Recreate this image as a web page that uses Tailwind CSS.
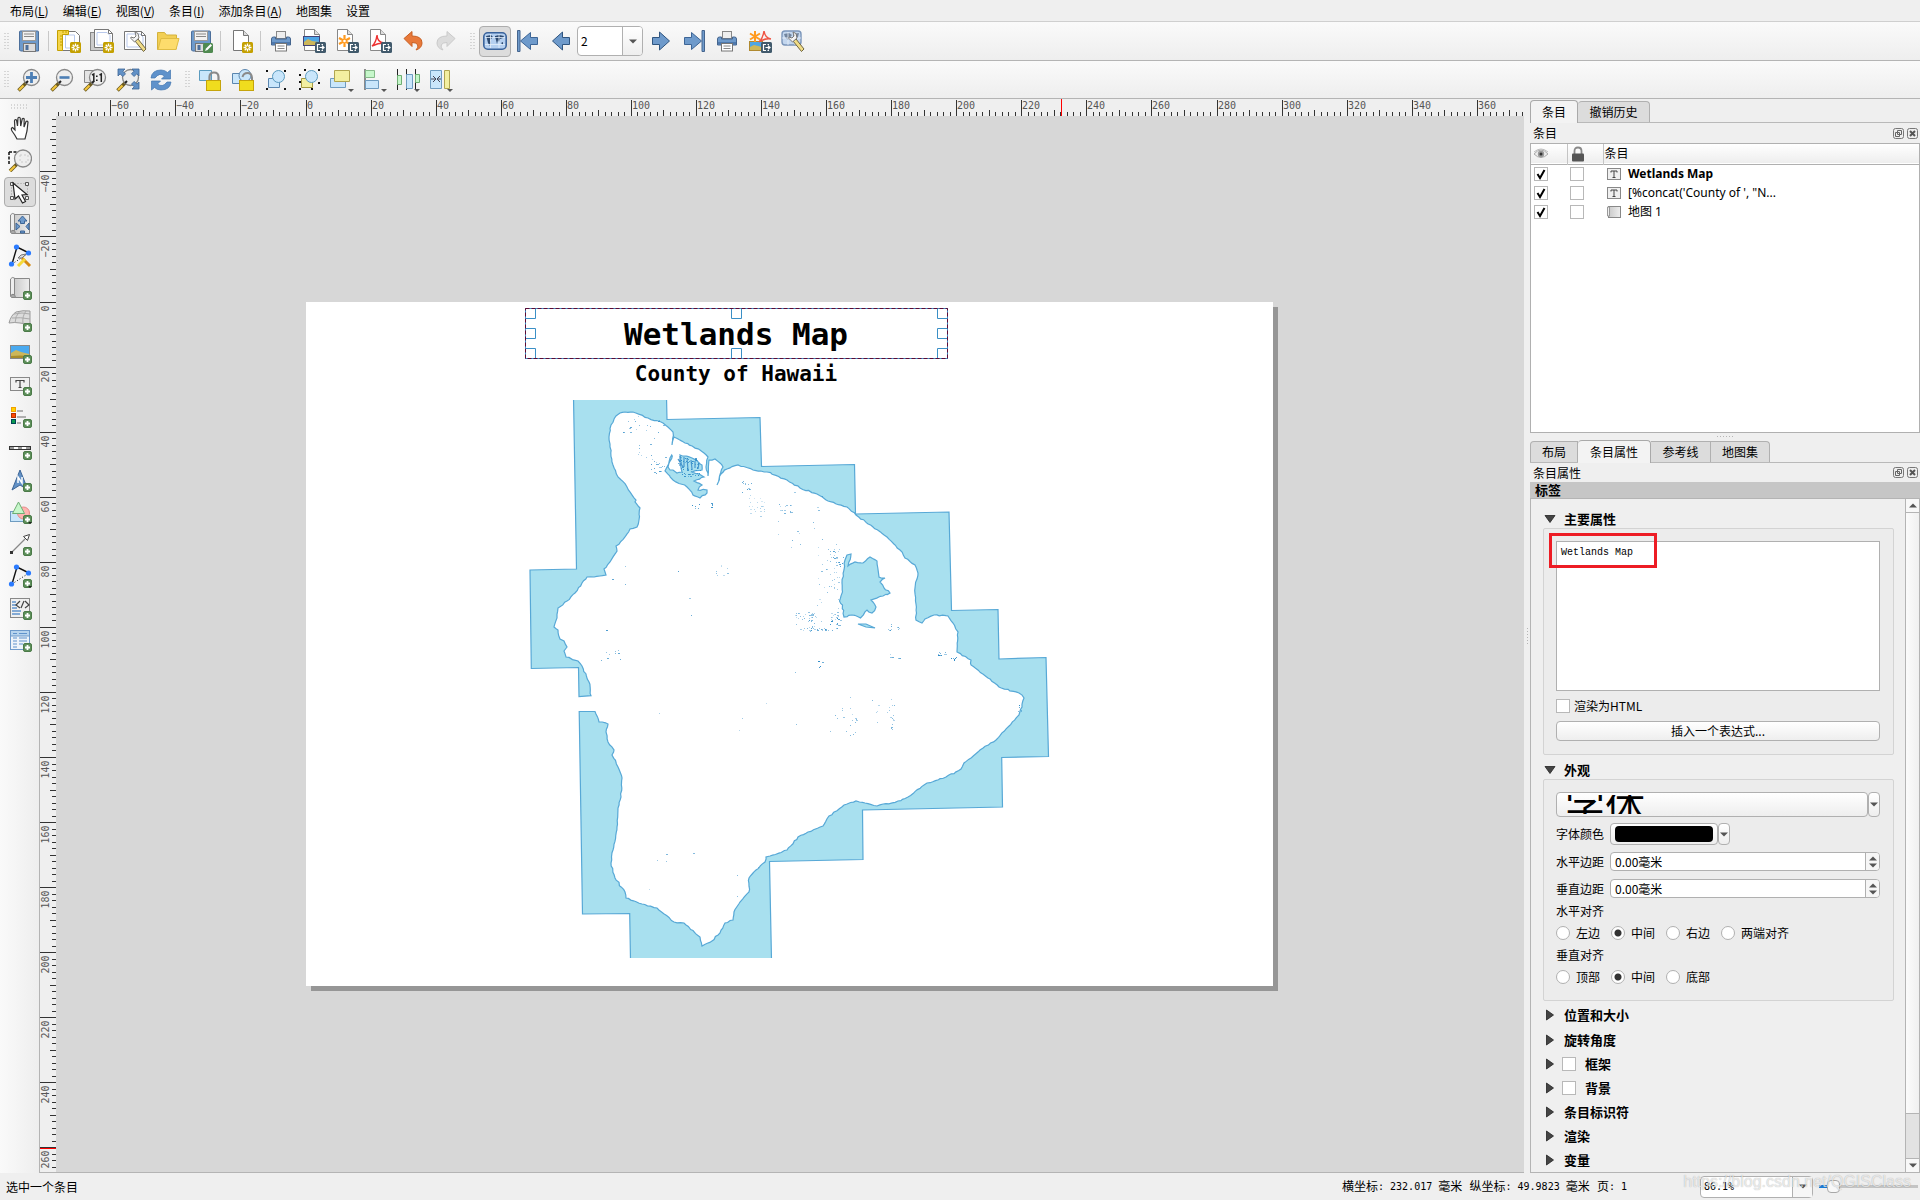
<!DOCTYPE html>
<html lang="zh-CN">
<head>
<meta charset="utf-8">
<title>布局</title>
<script src="https://cdn.jsdelivr.net/npm/@tailwindcss/browser@4"></script>
</head>
<body class="h-screen overflow-hidden bg-[#efefef] text-black text-xs leading-4 font-['Noto_Sans_CJK_SC',sans-serif]">

<svg class="absolute size-0" aria-hidden="true">
  <defs>
    <linearGradient id="gGray" x1="0" x2="1"><stop offset="0" stop-color="#c9c9c9"/><stop offset="1" stop-color="#eeeeee"/></linearGradient>
  </defs>
  <symbol id="star" viewBox="0 0 11 11"><rect width="11" height="11" rx="1.5" fill="#c4a000"/><path d="M5.500 1.500v8M1.500 5.500h8M2.700 2.700l5.600 5.600M8.300 2.700l-5.600 5.600" stroke="#fff" stroke-width="1.300"/><circle cx="5.500" cy="5.500" r="1.200" fill="#c4a000"/></symbol>
  <symbol id="plus" viewBox="0 0 9 9"><rect x=".5" y=".5" width="8" height="8" rx="1.500" fill="#5d8f5a" stroke="#4b7a48"/><path d="M4.500 2v5M2 4.500h5" stroke="#fff" stroke-width="1.800"/></symbol>
  <symbol id="export" viewBox="0 0 11 11"><rect width="11" height="11" rx="1.500" fill="#415a6c"/><path d="M5 2.500H2.500v6H5M6.500 2.500H8M6.500 8.500H8M4.500 5.500h4M7 3.800l2 1.700-2 1.700" fill="none" stroke="#fff" stroke-width="1.200"/></symbol>
  <symbol id="page" viewBox="0 0 24 24"><path d="M4.500 1.500h10l5 5v15h-15z" fill="#fff" stroke="#777"/><path d="M14.500 1.500v5h5" fill="#ddd" stroke="#777"/></symbol>
  <symbol id="save" viewBox="0 0 24 24"><path d="M2.500 3q0-1 1-1h17q1 0 1 1v19h-18l-1-1z" fill="#6e9acb" stroke="#4c6f9b"/><rect x="5.500" y="2.500" width="13" height="9" fill="#f2f2f2" stroke="#999"/><path d="M7 5h10M7 7.500h10" stroke="#888"/><rect x="6.500" y="14.500" width="12" height="8" fill="#ddd" stroke="#777"/><rect x="8.500" y="16" width="3" height="5" fill="#4c6f9b"/></symbol>
  <symbol id="saveas" viewBox="0 0 24 24"><use href="#save"/><rect x="14" y="14" width="10" height="10" rx="1.500" fill="#4f8a50"/><path d="M16 22l1-2.500 4.500-4.500 1.500 1.500-4.500 4.500z" fill="#fff"/></symbol>
  <symbol id="newlayout" viewBox="0 0 24 24"><path d="M5.500 2.500h13l4 4v15h-17z" fill="#fff" stroke="#777"/><path d="M8.500 6h9v13h-9z" fill="none" stroke="#b9c9ec"/><path d="M.5 1.500h11v4h-6v16h-5z" fill="#f5d54a" stroke="#c4a000"/><path d="M3 7h3M3 10h3M3 13h3M3 16h3M6 2v2M9 2v2" stroke="#c4a000"/><use href="#star" x="13" y="13" width="11" height="11"/></symbol>
  <symbol id="duplayout" viewBox="0 0 24 24"><rect x=".5" y="3.500" width="17" height="18" fill="#ccc" stroke="#888"/><path d="M4.500 .500h14l4 4v14h-18z" fill="#fff" stroke="#777"/><path d="M7 3.500h10l3 3v9.500h-13z" fill="none" stroke="#b9c9ec"/><path d="M18.500 .500v4h4" fill="none" stroke="#777"/><use href="#star" x="13" y="13" width="11" height="11"/></symbol>
  <symbol id="wrench" viewBox="0 0 24 24"><path d="M12 12l3-2 8 10-2.500 2.500z" fill="#f0dc86" stroke="#6f6440"/><path d="M8 9.500l3.500 3.500 4.500-4-1-4.500-3-1.500 1 4-2 2-3-1q-.5 1 0 1.500z" fill="#f4f4f4" stroke="#777"/></symbol>
  <symbol id="manager" viewBox="0 0 24 24"><path d="M1.500 2.500h17l4 4v14h-21z" fill="#fff" stroke="#777"/><path d="M4 5h13l3 3v10h-16z" fill="none" stroke="#b9c9ec"/><path d="M18.500 2.500v4h4" fill="none" stroke="#777"/><use href="#wrench"/></symbol>
  <symbol id="folder" viewBox="0 0 24 24"><path d="M1.500 20.500v-17h7l2 2.500h10v14z" fill="#f2cf55" stroke="#d4b23c"/><path d="M2 20.500l3-11h18l-3 11z" fill="#fddc6c" stroke="#e0bd45"/></symbol>
  <symbol id="newpage" viewBox="0 0 24 24"><use href="#page"/><use href="#star" x="13" y="13" width="11" height="11"/></symbol>
  <symbol id="print" viewBox="0 0 24 24"><rect x="7.500" y="2.500" width="9" height="7" fill="#eee" stroke="#888"/><path d="M2.500 10q0-2 2-2h2v2h11v-2h2q2 0 2 2v6h-19z" fill="#6e9acb" stroke="#45658e"/><path d="M3 13h18v2.500h-18z" fill="#4f79ac"/><rect x="6.500" y="14.500" width="11" height="7.500" fill="#fff" stroke="#777"/><path d="M8.500 17h7M8.500 19.500h7" stroke="#888"/></symbol>
  <symbol id="exportimg" viewBox="0 0 24 24"><path d="M2.500 .500h10l5 5v16h-15z" fill="#fff" stroke="#888"/><path d="M12.500 .500v5h5" fill="#ddd" stroke="#888"/><rect x="1.500" y="7.500" width="16" height="9" fill="#4ea6e6" stroke="#447"/><path d="M2 16v-3l4-3 4 2 7 1v3z" fill="#cdb75a"/><use href="#export" x="13" y="13" width="11" height="11"/></symbol>
  <symbol id="exportsvg" viewBox="0 0 24 24"><path d="M2.500 .500h10l5 5v16h-15z" fill="#fff" stroke="#888"/><path d="M12.500 .500v5h5" fill="#ddd" stroke="#888"/><path d="M9.500 6v12M4 9l11 6M15 9l-11 6" stroke="#ff9a1f" stroke-width="2.200"/><circle cx="9.500" cy="12" r="1.300" fill="#fff"/><use href="#export" x="13" y="13" width="11" height="11"/></symbol>
  <symbol id="exportpdf" viewBox="0 0 24 24"><path d="M2.500 .500h10l5 5v16h-15z" fill="#fff" stroke="#888"/><path d="M12.500 .500v5h5" fill="#ddd" stroke="#888"/><path d="M4 17q4-3 5-11q0 7 7 8q-6 0-12 3z" fill="none" stroke="#e33" stroke-width="1.500"/><use href="#export" x="13" y="13" width="11" height="11"/></symbol>
  <symbol id="undo" viewBox="0 0 24 24"><path d="M3 9.500l8-7v4.500q10 0 10 7 0 5-6 7 3-3 1.500-5.500-1.500-2-5.500-2v4z" fill="#e8793a" stroke="#c85f22"/></symbol>
  <symbol id="redo" viewBox="0 0 24 24"><path d="M21 9.500l-8-7v4.500q-10 0-10 7 0 5 6 7-3-3-1.500-5.500 1.500-2 5.500-2v4z" fill="#dcdcdc" stroke="#cacaca"/></symbol>
  <symbol id="atlas" viewBox="0 0 24 24"><rect x=".8" y="3.800" width="22.400" height="16.400" rx="4" fill="#b5d0f0" stroke="#3a639b" stroke-width="1.600"/><path d="M3 7l5-1 2 2-3 3 1 3-1 3-2-3-1-4zM12 7l4-1 5 1-1 2-3 1-1 3-1-2-1 4-1-4-1-3zM18 14l2-1v3z" fill="#2d4a70"/><path d="M7.500 5v14M16 5v14M2 8.500h20M2 15.500h20" stroke="#e6f0fb" stroke-width=".8"/></symbol>
  <symbol id="first" viewBox="0 0 24 24"><path d="M21.500 8.500h-7v-5l-10 8.500 10 8.500v-5h7z" fill="#6e9acb" stroke="#3d6596"/><path d="M1.500 1.500h2.500v21h-2.500z" fill="#6e9acb" stroke="#45658e"/></symbol>
  <symbol id="prev" viewBox="0 0 24 24"><path d="M20.500 8.500h-7v-5.500l-10 9 10 9v-5.500h7z" fill="#6e9acb" stroke="#2f5580"/></symbol>
  <symbol id="next" viewBox="0 0 24 24"><path d="M3.500 8.500h7v-5.500l10 9-10 9v-5.500h-7z" fill="#6e9acb" stroke="#2f5580"/></symbol>
  <symbol id="last" viewBox="0 0 24 24"><path d="M2.500 8.500h7v-5l10 8.500-10 8.500v-5h-7z" fill="#6e9acb" stroke="#3d6596"/><path d="M20 1.500h2.500v21h-2.500z" fill="#6e9acb" stroke="#45658e"/></symbol>
  <symbol id="atlasexport" viewBox="0 0 24 24"><rect x="1.500" y="12.500" width="13" height="9" fill="#4ea6e6" stroke="#b08a30"/><path d="M2 21v-3l4-2 8 2v3z" fill="#cdb75a"/><path d="M7 2v11M2 4.500l10 6M12 4.500l-10 6" stroke="#ff9a1f" stroke-width="2"/><path d="M11 13q4-4 5-11q1 7 7 8q-6-1-12 3z" fill="none" stroke="#e54" stroke-width="1.500"/><use href="#export" x="13" y="13" width="11" height="11"/></symbol>
  <symbol id="atlasset" viewBox="0 0 24 24"><g opacity=".65"><rect x="1" y="2" width="19" height="14" rx="3" fill="#a9c7ec" stroke="#3a639b" stroke-width="1.400"/><path d="M3 5l5-1 3 2-4 5-3-3zM12 5l6-1-1 4-3 4-2-4z" fill="#2d4a70"/><path d="M7 3v13M14 3v13M1 9h19" stroke="#e6f0fb" stroke-width=".8"/></g><use href="#wrench"/></symbol>
  <symbol id="lens" viewBox="0 0 24 24"><path d="M9 15l-7.500 7.500" stroke="#6b5a20" stroke-width="3.500"/><path d="M6.500 17.500l-4.500 4.500" stroke="#f3c53b" stroke-width="2.200"/><circle cx="14.500" cy="9.500" r="8" fill="#eee" stroke="#888" stroke-width="1.300"/><path d="M9 15l2-2" stroke="#222" stroke-width="2"/></symbol>
  <symbol id="zoomin" viewBox="0 0 24 24"><use href="#lens"/><path d="M14.500 4v11M9 9.500h11" stroke="#4d7fb5" stroke-width="2.800"/></symbol>
  <symbol id="zoomout" viewBox="0 0 24 24"><use href="#lens"/><path d="M9.500 9.500h10" stroke="#4d7fb5" stroke-width="2.600"/></symbol>
  <symbol id="zoom11" viewBox="0 0 24 24"><path d="M1.500 2.500h12v12h-12z" fill="#e4e4e4" stroke="#888"/><use href="#lens"/><path d="M9 7l1.800-1v8M16.500 7l1.800-1v8" fill="none" stroke="#222" stroke-width="1.500"/><path d="M13 7.500h1.600v1.600h-1.600zM13 11.500h1.600v1.600h-1.600z" fill="#222"/></symbol>
  <symbol id="zoomfull" viewBox="0 0 24 24"><use href="#lens"/><path d="M2 1h7l-2.200 2.200 2.700 2.700-2.700 2.700-2.700-2.700-2.100 2.100zM23 1v7l-2.200-2.200-2.700 2.700-2.700-2.700 2.700-2.700-2.100-2.100zM23 21h-7l2.200-2.200-2.700-2.700 2.700-2.700 2.700 2.700 2.100-2.100z" fill="#6291c6" stroke="#3d6596" stroke-width=".8"/></symbol>
  <symbol id="refresh" viewBox="0 0 24 24"><path d="M2 10q1-8 10-8 4 0 6.500 2.500l3-2.500v9h-9l3-3q-5-4-9.500 2z" fill="#5f92cb" stroke="#4477b0" stroke-width=".7"/><path d="M22 14q-1 8-10 8-4 0-6.500-2.500l-3 2.500v-9h9l-3 3q5 4 9.500-2z" fill="#5f92cb" stroke="#4477b0" stroke-width=".7"/></symbol>
  <symbol id="lockb" viewBox="0 0 24 24"><rect x="8.500" y="12.500" width="14" height="10" fill="#f0dc1e" stroke="#c5a40b"/></symbol>
  <symbol id="lockall" viewBox="0 0 24 24"><path d="M1.500 2.500h12v10h-12z" fill="#c9e6fb" stroke="#5b9bbf"/><path d="M11.500 12v-3q0-4.500 4.500-4.500t4.500 4.500v3" fill="none" stroke="#8a8a8a" stroke-width="2.200"/><use href="#lockb"/></symbol>
  <symbol id="unlock" viewBox="0 0 24 24"><path d="M1.500 5.500h10v10h-10z" fill="#c9e6fb" stroke="#5b86af"/><circle cx="14" cy="7.500" r="6" fill="#c9e6fb" stroke="#5b86af"/><path d="M11.500 9q1-4 5-4t4.500 4.500v3" fill="none" stroke="#8a8a8a" stroke-width="2"/><use href="#lockb"/></symbol>
  <symbol id="group" viewBox="0 0 24 24"><path d="M4.500 10.500h11v9h-11z" fill="#c9e6fb" stroke="#5b86af"/><circle cx="14.500" cy="8.500" r="6" fill="#c9e6fb" stroke="#5b9bbf"/><path d="M2 2h2v2h-2zM20 2h2v2h-2zM2 20h2v2h-2zM20 20h2v2h-2z" fill="#111"/></symbol>
  <symbol id="ungroup" viewBox="0 0 24 24"><path d="M4.500 10.500h11v9h-11z" fill="#f3efa0" stroke="#a59a40"/><circle cx="14.500" cy="8.500" r="6" fill="#c9e6fb" stroke="#5b9bbf"/><path d="M2 6h2v2h-2zM2 20h2v2h-2zM14 20h2v2h-2zM7 1h2v2h-2zM21 1h2v2h-2zM21 14h2v2h-2zM2 13h2v2h-2z" fill="#111"/></symbol>
  <symbol id="raise" viewBox="0 0 24 24"><path d="M.5 10.500h15v9h-15z" fill="#c9e6fb" stroke="#6f9cc0"/><path d="M4.500 2.500h15v11h-15z" fill="#f3efa0" stroke="#b0a550"/><path d="M18 21h6l-3 3z" fill="#555"/></symbol>
  <symbol id="align" viewBox="0 0 24 24"><path d="M2 1v21" stroke="#222"/><path d="M2.500 2.500h9v7h-9z" fill="#c6f7ca" stroke="#86bb8a"/><path d="M2.500 12.500h13v8h-13z" fill="#c9e6fb" stroke="#6f9cc0"/><path d="M18 21h6l-3 3z" fill="#555"/></symbol>
  <symbol id="distribute" viewBox="0 0 24 24"><path d="M1.500 1v21M10.500 1v21M19.500 1v21" stroke="#222"/><path d="M1.500 7.500h4v9h-4zM19.500 6.500h4v8h-4z" fill="#c6f7ca" stroke="#6fae74"/><path d="M10.500 6.500h6v14h-6z" fill="#c9e6fb" stroke="#6f9cc0"/><path d="M18 21h6l-3 3z" fill="#555"/></symbol>
  <symbol id="resize" viewBox="0 0 24 24"><path d="M1.500 2.500h11v18h-11z" fill="#c9e6fb" stroke="#6f9cc0"/><path d="M15.500 2.500h5v18h-5z" fill="#f3efa0" stroke="#b0a550"/><path d="M2 11h4M4 8l3 3-3 3M12 11h-3M11 8l-3 3 3 3" fill="none" stroke="#445"/><path d="M18 21h6l-3 3z" fill="#555"/></symbol>
  <symbol id="hand" viewBox="0 0 24 24"><path d="M9 23q-2-4-5-8-1.500-3 .5-3.500l2.500 2.500-.5-9q.3-2 2-1l1 6 .5-8q1-1.500 2.200 0l.5 8 1.500-7q1-1.200 2 0l-.2 8 2-5.500q1.300-1 2 .5l-1 9-2 8z" fill="#fff" stroke="#333" stroke-width="1.200"/></symbol>
  <symbol id="zoomtool" viewBox="0 0 24 24"><path d="M1 4h12M1 4v12" stroke="#111" stroke-width="1.500" stroke-dasharray="3 1.500"/><path d="M9 16l-7 7" stroke="#6b5a20" stroke-width="3.500"/><path d="M7 18l-5 5" stroke="#f3c53b" stroke-width="2"/><circle cx="15" cy="10.500" r="8.500" fill="#eee" stroke="#888" stroke-width="1.300"/><path d="M12 7h8v7h-8z" fill="none" stroke="#ccc" stroke-dasharray="2 2"/></symbol>
  <symbol id="select" viewBox="0 0 24 24"><path d="M3.500 3.500h16v15h-16z" fill="none" stroke="#999" stroke-dasharray="1 2"/><path d="M2.500 2.500h3v3h-3zM17.500 2.500h3v3h-3zM2.500 16.500h3v3h-3zM17.500 16.500h3v3h-3z" fill="#eee" stroke="#555"/><path d="M5 3l2 16 3.500-3 4 7 3-1.500-3.500-6.500 5-.5z" fill="#fff" stroke="#222" stroke-width="1.200"/></symbol>
  <symbol id="scroll" viewBox="0 0 24 24"><path d="M5.500 2.500h16v19h-16z" fill="url(#gGray)" stroke="#888"/><path d="M2.500 3q1.500-2.500 4-1v16.500q-3-1-4 1.500z" fill="#eee" stroke="#888"/><path d="M2.500 20q1-2 4-1.500l1 3h-4z" fill="#aaa" stroke="#888"/></symbol>
  <symbol id="movecontent" viewBox="0 0 24 24"><use href="#scroll"/><path d="M14.500 4l4.500 5h-2.500v2.500h-4v-2.500h-2.500zM8 11l4 3.500-4 3.500zM21 11v7l-3-3.500zM12.500 21v-2h4v2z" fill="#6e9acb" stroke="#3d6596"/></symbol>
  <symbol id="tri" viewBox="0 0 24 24"><path d="M4 20L9 3l12 6" fill="none" stroke="#111" stroke-width="1.400"/><path d="M4 20L21 9" stroke="#111" stroke-dasharray="1 2"/><circle cx="8.500" cy="3" r="2.600" fill="#2b7bff"/><circle cx="20.500" cy="9" r="2.600" fill="#2b7bff"/><circle cx="3.500" cy="20" r="2.600" fill="#2b7bff"/></symbol>
  <symbol id="editnodes" viewBox="0 0 24 24"><use href="#tri"/><path d="M14 14l8 8" stroke="#d58a12" stroke-width="3"/><path d="M17 15l-7 7" stroke="#f6da3a" stroke-width="3"/><path d="M10 14q2-4 8-4l-4 4z" fill="#ddd" stroke="#777"/></symbol>
  <symbol id="p" viewBox="0 0 24 24"><use href="#plus" x="15" y="15" width="9" height="9"/></symbol>
  <symbol id="addmap" viewBox="0 0 24 24"><use href="#scroll"/><use href="#p"/></symbol>
  <symbol id="add3d" viewBox="0 0 24 24"><path d="M1 15q2-8 7-11 7-2 14-1v15q-6-3-10-3-5-1-11 0z" fill="#dcdcdc" stroke="#999"/><path d="M4 10q8-1 18 1M6 6q8-2 16 0M12 3q-5 5-5 12M18 3q-4 5-3 13" fill="none" stroke="#aaa"/><use href="#p"/></symbol>
  <symbol id="addpic" viewBox="0 0 24 24"><rect x="2.500" y="5.500" width="19" height="13" fill="#4aaaf0" stroke="#888"/><path d="M3 18v-5l5-3 5 2 8 2v4z" fill="#cdb75a"/><path d="M3 18v-2q9-1 18 0v2z" fill="#a88d2c"/><use href="#p"/></symbol>
  <symbol id="addlabel" viewBox="0 0 24 24"><rect x="2.500" y="5.500" width="19" height="13" fill="#f0f0f0" stroke="#888"/><path d="M8 10.500v-2h8v2M12 8.500v7M10.500 15.500h3" fill="none" stroke="#444" stroke-width="1.200"/><use href="#p"/></symbol>
  <symbol id="addlegend" viewBox="0 0 24 24"><rect x="3.500" y="3.500" width="4" height="4" fill="#ffd200" stroke="#f0a000"/><rect x="3.500" y="9.500" width="4" height="4" fill="#ff4a00" stroke="#b33000"/><rect x="3.500" y="15.500" width="4" height="4" fill="#0a9a50" stroke="#045"/><path d="M9 7h6M9 13h9M9 19h4" stroke="#999" stroke-width="1.600"/><use href="#p"/></symbol>
  <symbol id="addscale" viewBox="0 0 24 24"><rect x="1.500" y="10.500" width="21" height="3" fill="#999" stroke="#333"/><path d="M6 12h4M14 12h4" stroke="#fff" stroke-width="2"/><use href="#p"/></symbol>
  <symbol id="addnorth" viewBox="0 0 24 24"><path d="M12 2l8 20-8-5-8 5z" fill="#6291c6" stroke="#3d6596"/><path d="M10 15v-6l4 6v-6" fill="none" stroke="#fff" stroke-width="1.500"/><use href="#p"/></symbol>
  <symbol id="addshape" viewBox="0 0 24 24"><rect x="2.500" y="11.500" width="13" height="10" fill="#c9e6fb" stroke="#6f9cc0"/><circle cx="15.500" cy="13" r="6" fill="#ffb3b0" stroke="#e58a88"/><path d="M10.500 2l6 11.500h-12z" fill="#c6f7ca" stroke="#6fae74"/><use href="#p"/><path d="M20 22h4l-2 2z" fill="#222"/></symbol>
  <symbol id="addarrow" viewBox="0 0 24 24"><path d="M4 20L17 7" stroke="#888" stroke-width="1.300"/><path d="M21.500 2.500l-6 2 4 4z" fill="#fff" stroke="#444"/><rect x="2" y="19" width="3" height="3" fill="#333"/><use href="#p"/></symbol>
  <symbol id="addnode" viewBox="0 0 24 24"><use href="#tri"/><use href="#p"/><path d="M20 22h4l-2 2z" fill="#222"/></symbol>
  <symbol id="addhtml" viewBox="0 0 24 24"><rect x="2.500" y="2.500" width="19" height="19" fill="#f0f0f0" stroke="#888"/><path d="M4 6h4M4 9h5M4 12h5M4 15h9M4 18h8" stroke="#5f92cb" stroke-width="1.700"/><path d="M12 5l-4 4 4 3M13 12l3-7M17 5l4 4-4 3" fill="none" stroke="#444" stroke-width="1.200"/><use href="#p"/></symbol>
  <symbol id="addtable" viewBox="0 0 24 24"><rect x="2.500" y="2.500" width="19" height="19" fill="#eef4fa" stroke="#6e9acb"/><path d="M3 3h18v5h-18z" fill="#b7d4ee"/><path d="M5 5.500h4M11 5.500h8M5 10h4M11 10h8M5 13h4M11 13h8M5 16h4M11 16h4M5 19h4" stroke="#5f92cb" stroke-width="1.200"/><path d="M3 8h18" stroke="#6e9acb"/><use href="#p"/></symbol>
  <symbol id="down" viewBox="0 0 8 5"><path d="M0 .5h8L4 4.500z" fill="#555"/></symbol>
  <symbol id="up" viewBox="0 0 8 5"><path d="M0 4.500h8L4 .5z" fill="#555"/></symbol>
  <symbol id="open" viewBox="0 0 12 12"><path d="M1 2.500h10L6 9.500z" fill="#444" stroke="#222" stroke-width=".8"/></symbol>
  <symbol id="shut" viewBox="0 0 12 12"><path d="M2.500 1v10L9.500 6z" fill="#444" stroke="#222" stroke-width=".8"/></symbol>
  <symbol id="check" viewBox="0 0 14 14"><path d="M3.500 7l2.500 4 4.500-8" fill="none" stroke="#000" stroke-width="2"/></symbol>
  <symbol id="float" viewBox="0 0 11 11"><rect x=".5" y=".5" width="10" height="10" rx="2" fill="#eee" stroke="#777"/><path d="M4.500 2.500h4v4h-4zM2.500 4.500h4v4h-4z" fill="#eee" stroke="#666"/></symbol>
  <symbol id="close" viewBox="0 0 11 11"><rect x=".5" y=".5" width="10" height="10" rx="2" fill="#eee" stroke="#777"/><path d="M3 3l5 5M8 3l-5 5" stroke="#555" stroke-width="2"/></symbol>
  <symbol id="label" viewBox="0 0 14 12"><rect x=".5" y=".5" width="13" height="11" fill="#f0f0f0" stroke="#888"/><path d="M4 4.500v-1.500h6v1.500M7 3v6.500M5.500 9.500h3" fill="none" stroke="#444"/></symbol>
  <symbol id="mapitem" viewBox="0 0 14 12"><rect x="1.500" y=".5" width="12" height="11" fill="url(#gGray)" stroke="#888"/><path d="M.5 1h2v9h-2z" fill="#eee" stroke="#999"/></symbol>
  <symbol id="eye" viewBox="0 0 16 12"><path d="M1 6q7-8 14 0-7 7-14 0z" fill="#eee" stroke="#aaa"/><circle cx="8" cy="6" r="3.200" fill="#999"/><circle cx="8" cy="6" r="1.500" fill="#333"/><path d="M1 4q7-6 14 0" fill="none" stroke="#bbb"/></symbol>
  <symbol id="lock" viewBox="0 0 14 16"><path d="M3.500 9v-4q0-3.500 3.500-3.500t3.500 3.500v4" fill="none" stroke="#888" stroke-width="1.800"/><rect x="1" y="7.500" width="12" height="8" rx="1" fill="#555"/></symbol>
  <symbol id="grip" viewBox="0 0 5 17"><path d="M1 0v17M4 0v17" stroke="#b5b5b5" stroke-dasharray="1 2"/></symbol>
</svg>

<div class="flex h-full flex-col">
  <nav class="flex h-[22px] shrink-0 items-center gap-[14px] border-b border-[#cfcfcf] px-[10px]" aria-label="菜单">
    <button class="whitespace-nowrap">布局(<u>L</u>)</button>
    <button class="whitespace-nowrap">编辑(<u>E</u>)</button>
    <button class="whitespace-nowrap">视图(<u>V</u>)</button>
    <button class="whitespace-nowrap">条目(<u>I</u>)</button>
    <button class="whitespace-nowrap">添加条目(<u>A</u>)</button>
    <button class="whitespace-nowrap">地图集</button>
    <button class="whitespace-nowrap">设置</button>
  </nav>

  <div role="toolbar" aria-label="布局工具" class="flex h-[39px] shrink-0 items-center border-b border-[#b4b4b4] bg-linear-to-b from-[#fafafa] to-[#eeeeee]">
    <svg class="ml-1 mr-[3px] h-[17px] w-[5px] shrink-0"><use href="#grip"/></svg>
    <span data-icons="save | newlayout duplayout manager folder saveas | newpage | print exportimg exportsvg exportpdf undo redo" class="flex items-center"></span>
    <svg class="ml-2 mr-1 h-[17px] w-[5px] shrink-0"><use href="#grip"/></svg>
    <button aria-label="预览地图集" aria-pressed="true" class="flex h-[31px] w-8 items-center justify-center rounded-sm border border-[#adadad] bg-[#dcdcdc]"><svg class="size-6"><use href="#atlas"/></svg></button>
    <span data-icons="first prev" class="flex items-center"></span>
    <span class="mr-px flex h-[30px] w-[66px] overflow-hidden rounded-sm border border-[#b0b0b0] bg-white">
      <input aria-label="地图集页" value="2" class="w-11 min-w-0 px-[3px] text-xs outline-none">
      <button aria-label="选择页" class="flex flex-1 items-center justify-center border-l border-[#b0b0b0] bg-linear-to-b from-white to-[#eeeeee]"><svg class="h-[5px] w-2"><use href="#down"/></svg></button>
    </span>
    <span data-icons="next last print atlasexport atlasset" class="flex items-center"></span>
  </div>

  <div role="toolbar" aria-label="动作" class="flex h-[38px] shrink-0 items-center border-b border-[#b4b4b4] bg-linear-to-b from-[#fafafa] to-[#eeeeee]">
    <svg class="ml-1 mr-[3px] h-[17px] w-[5px] shrink-0"><use href="#grip"/></svg>
    <span data-icons="zoomin zoomout zoom11 zoomfull refresh" class="flex items-center"></span>
    <svg class="ml-2 mr-[3px] h-[17px] w-[5px] shrink-0"><use href="#grip"/></svg>
    <span data-icons="lockall unlock group ungroup raise align distribute resize" class="flex items-center"></span>
  </div>

  <div class="flex min-h-0 flex-1">
    <div id="tools" role="toolbar" aria-label="工具箱" class="flex w-10 shrink-0 flex-col items-center border-r border-[#b4b4b4] bg-linear-to-r from-[#fafafa] to-[#eeeeee] pt-[5px]">
      <svg class="mb-[3px] h-[5px] w-[17px] shrink-0"><path d="M0 1h17M0 4h17" stroke="#b5b5b5" stroke-dasharray="1 2"/></svg>
    </div>

    <main class="flex min-w-0 flex-1 flex-col border-b border-[#b4b4b4]">
      <svg id="hruler" class="h-[17px] w-full shrink-0 bg-[#efefef] font-['DejaVu_Sans_Mono',monospace] text-[10px]"></svg>
      <div class="flex min-h-0 flex-1">
        <svg id="vruler" class="h-full w-4 shrink-0 bg-[#efefef] font-['DejaVu_Sans_Mono',monospace] text-[10px]"></svg>
        <div class="relative min-w-0 flex-1 overflow-hidden bg-[#d7d7d7]">
          <svg id="canvas" class="absolute inset-0 h-full w-full" aria-label="布局画布">
            <g transform="translate(-56 -116)">
              <rect x="311" y="307" width="967" height="684" fill="#969696"/>
              <rect x="306" y="302" width="967" height="684" fill="#fff"/>
              <g id="map"></g>
              <g text-anchor="middle" class="font-['DejaVu_Sans_Mono',monospace] font-bold">
                <text x="736" y="345" class="text-[31px]">Wetlands Map</text>
                <text x="736" y="381" class="text-[21px]">County of Hawaii</text>
              </g>
              <g fill="none" stroke="#3a8fc6">
                <rect x="525.500" y="308.500" width="422" height="50"/>
                <path d="M525.500 308.500h422v50h-422z" stroke="#5e0a35" stroke-dasharray="4 2"/>
                <path d="M535.500 309v9.500h-10M535.500 358v-9.500h-10M526 328.500h9.500v10h-9.500M937.500 309v9.500h10M937.500 358v-9.500h10M947 328.500h-9.500v10h9.500M731.500 309v9.500h10v-9.500M731.500 358v-9.500h10v9.500"/>
              </g>
            </g>
          </svg>
        </div>
      </div>
    </main>

    <div class="flex w-[6px] shrink-0 items-center justify-center"><svg class="h-[17px] w-[3px]"><path d="M1.500 0v17" stroke="#b5b5b5" stroke-dasharray="1 2"/></svg></div>

    <aside class="flex w-[390px] shrink-0 flex-col">
      <div role="tablist" class="flex h-6 shrink-0 items-end border-b border-[#b9b9b9]">
        <button role="tab" aria-selected="true" class="-mb-px h-[23px] w-12 rounded-t-sm border border-b-0 border-[#a9a9a9] bg-[#f3f3f3]">条目</button>
        <button role="tab" class="h-[21px] w-[72px] rounded-t-sm border border-l-0 border-b-0 border-[#b0b0b0] bg-[#dcdcdc]">撤销历史</button>
      </div>
      <div class="flex h-5 shrink-0 items-center gap-[3px] pl-[3px] pr-[2px]">
        <h2 class="flex-1">条目</h2>
        <button aria-label="浮动"><svg class="size-[11px]"><use href="#float"/></svg></button>
        <button aria-label="关闭"><svg class="size-[11px]"><use href="#close"/></svg></button>
      </div>
      <div class="h-[290px] shrink-0 border border-[#b0b0b0] bg-white">
        <table class="w-full table-fixed border-collapse text-left font-['Noto_Sans','Noto_Sans_CJK_SC',sans-serif]">
          <thead>
            <tr class="h-5 border-b border-[#b0b0b0] bg-linear-to-b from-white to-[#eeeeee]">
              <th class="w-9 border-r border-[#c4c4c4] p-0 pl-[2px]"><svg class="h-3 w-4" role="img" aria-label="可见"><use href="#eye"/></svg></th>
              <th class="w-9 border-r border-[#c4c4c4] p-0 pl-[3px]"><svg class="h-4 w-[14px]" role="img" aria-label="锁定"><use href="#lock"/></svg></th>
              <th class="p-0 pl-px font-normal">条目</th>
            </tr>
          </thead>
          <tbody id="items"></tbody>
        </table>
      </div>
      <div class="flex h-[6px] shrink-0 items-center justify-center"><svg class="h-[3px] w-[17px]"><path d="M0 1.500h17" stroke="#b5b5b5" stroke-dasharray="1 2"/></svg></div>
      <div role="tablist" class="flex h-6 shrink-0 items-end border-b border-[#b9b9b9]">
        <button role="tab" class="h-[21px] w-12 rounded-tl-sm border border-b-0 border-[#b0b0b0] bg-[#dcdcdc]">布局</button>
        <button role="tab" aria-selected="true" class="-mb-px h-[23px] w-[73px] rounded-t-sm border border-b-0 border-l-0 border-[#a9a9a9] bg-[#f3f3f3]">条目属性</button>
        <button role="tab" class="h-[21px] w-[60px] border border-b-0 border-l-0 border-[#b0b0b0] bg-[#dcdcdc]">参考线</button>
        <button role="tab" class="h-[21px] w-[59px] rounded-tr-sm border border-b-0 border-l-0 border-[#b0b0b0] bg-[#dcdcdc]">地图集</button>
      </div>
      <div class="flex h-[19px] shrink-0 items-center gap-[3px] pl-[3px] pr-[2px]">
        <h2 class="flex-1">条目属性</h2>
        <button aria-label="浮动"><svg class="size-[11px]"><use href="#float"/></svg></button>
        <button aria-label="关闭"><svg class="size-[11px]"><use href="#close"/></svg></button>
      </div>
      <h3 class="h-4 shrink-0 bg-[#c6c6c6] pl-[5px] text-[13px] font-bold">标签</h3>

      <div class="flex min-h-0 flex-1 border border-[#b4b4b4]">
        <div class="min-w-0 flex-1 overflow-hidden pl-3 pr-[11px]">
          <button class="mt-[11px] flex h-[18px] items-center gap-2 pl-px text-[13px] font-bold"><svg class="size-3"><use href="#open"/></svg>主要属性</button>
          <section class="relative h-[227px] rounded-xs border border-[#d3d3d3] bg-[#ececec] pl-3 pr-[13px] pt-3">
            <textarea aria-label="标签文本" class="block h-[150px] w-full resize-none border border-[#b0b0b0] bg-white px-1 py-[5px] font-['Liberation_Mono',monospace] text-[10px] leading-3 outline-none">Wetlands Map</textarea>
            <div class="pointer-events-none absolute left-[5px] top-1 h-[35px] w-[108px] border-[3px] border-[#ed1c24]"></div>
            <label class="mt-2 flex h-[14px] items-center gap-1"><input type="checkbox" class="size-[14px] appearance-none border border-[#b8b8b8] bg-white">渲染为HTML</label>
            <button class="mt-2 block h-5 w-full rounded-sm border border-[#b0b0b0] bg-linear-to-b from-white to-[#eeeeee]">插入一个表达式...</button>
          </section>
          <button class="mt-[6px] flex h-[18px] items-center gap-2 pl-px text-[13px] font-bold"><svg class="size-3"><use href="#open"/></svg>外观</button>
          <section class="h-[222px] rounded-xs border border-[#d3d3d3] bg-[#ececec] pl-3 pr-[13px] pt-3">
            <div class="flex h-[25px]">
              <button class="flex flex-1 items-center overflow-hidden rounded-sm border border-[#b0b0b0] bg-linear-to-b from-white to-[#eeeeee] px-2"><span class="flex h-[19px] items-center overflow-hidden text-[40px] leading-10">字体</span></button>
              <button aria-label="字体选项" class="flex w-3 items-center justify-center rounded-sm border border-[#b0b0b0] bg-linear-to-b from-white to-[#eeeeee]"><svg class="h-[5px] w-2"><use href="#down"/></svg></button>
            </div>
            <div class="mt-[6px] flex h-[22px] items-center">
              <span class="w-[54px]">字体颜色</span>
              <button aria-label="字体颜色" class="h-full w-[108px] rounded-sm border border-[#b0b0b0] bg-linear-to-b from-white to-[#eeeeee] px-1 py-[2px]"><span class="block h-4 rounded-sm bg-black"></span></button>
              <button aria-label="颜色选项" class="flex h-full w-3 items-center justify-center rounded-sm border border-[#b0b0b0] bg-linear-to-b from-white to-[#eeeeee]"><svg class="h-[5px] w-2"><use href="#down"/></svg></button>
            </div>
            <div class="mt-[7px] flex h-[19px] items-center">
              <label for="mh" class="w-[54px]">水平边距</label>
              <span class="flex h-full min-w-0 flex-1 overflow-hidden rounded-sm border border-[#b0b0b0] bg-white"><input id="mh" value="0.00毫米" class="min-w-0 flex-1 px-1 outline-none"><button aria-label="调整水平边距" class="flex w-[14px] flex-col items-center justify-center gap-[2px] border-l border-[#b0b0b0] bg-[#f6f6f6]"><svg class="h-[5px] w-2"><use href="#up"/></svg><svg class="h-[5px] w-2"><use href="#down"/></svg></button></span>
            </div>
            <div class="mt-2 flex h-[19px] items-center">
              <label for="mv" class="w-[54px]">垂直边距</label>
              <span class="flex h-full min-w-0 flex-1 overflow-hidden rounded-sm border border-[#b0b0b0] bg-white"><input id="mv" value="0.00毫米" class="min-w-0 flex-1 px-1 outline-none"><button aria-label="调整垂直边距" class="flex w-[14px] flex-col items-center justify-center gap-[2px] border-l border-[#b0b0b0] bg-[#f6f6f6]"><svg class="h-[5px] w-2"><use href="#up"/></svg><svg class="h-[5px] w-2"><use href="#down"/></svg></button></span>
            </div>
            <div class="mt-[5px] h-4">水平对齐</div>
            <div class="mt-[6px] flex h-4 items-center" data-radios="h:左边,中间,右边,两端对齐"></div>
            <div class="mt-[6px] h-4">垂直对齐</div>
            <div class="mt-[6px] flex h-4 items-center" data-radios="v:顶部,中间,底部"></div>
          </section>
          <div class="mt-px flex flex-col text-[13px] font-bold">
            <button class="flex h-[25px] items-center gap-2 pl-px"><svg class="size-3"><use href="#shut"/></svg>位置和大小</button>
            <button class="flex h-[25px] items-center gap-2 pl-px"><svg class="size-3"><use href="#shut"/></svg>旋转角度</button>
            <label class="flex h-6 items-center pl-px"><svg class="size-3"><use href="#shut"/></svg><input type="checkbox" class="mr-[9px] ml-[6px] size-[14px] appearance-none border border-[#b8b8b8] bg-white">框架</label>
            <label class="flex h-6 items-center pl-px"><svg class="size-3"><use href="#shut"/></svg><input type="checkbox" class="mr-[9px] ml-[6px] size-[14px] appearance-none border border-[#b8b8b8] bg-white">背景</label>
            <button class="flex h-6 items-center gap-2 pl-px"><svg class="size-3"><use href="#shut"/></svg>条目标识符</button>
            <button class="flex h-6 items-center gap-2 pl-px"><svg class="size-3"><use href="#shut"/></svg>渲染</button>
            <button class="flex h-6 items-center gap-2 pl-px"><svg class="size-3"><use href="#shut"/></svg>变量</button>
          </div>
        </div>
        <div class="flex w-[14px] shrink-0 flex-col border-l border-[#b4b4b4] bg-[#e2e2e2]">
          <button aria-label="向上滚动" class="flex h-[14px] shrink-0 items-center justify-center border-b border-[#b4b4b4] bg-[#f8f8f8]"><svg class="h-[5px] w-2"><use href="#up"/></svg></button>
          <div class="flex-1 border-b border-[#b4b4b4] bg-linear-to-r from-[#fbfbfb] to-[#f0f0f0]"></div>
          <div class="h-11 shrink-0"></div>
          <button aria-label="向下滚动" class="flex h-[14px] shrink-0 items-center justify-center border-t border-[#b4b4b4] bg-[#f8f8f8]"><svg class="h-[5px] w-2"><use href="#down"/></svg></button>
        </div>
      </div>
    </aside>
  </div>

  <footer class="relative flex h-[27px] shrink-0 items-center pl-[6px] pr-[2px]">
    <span class="flex-1">选中一个条目</span>
    <span class="flex w-[358px] items-center whitespace-pre font-['DejaVu_Sans_Mono','Noto_Sans_CJK_SC',monospace] text-[10px]"><span class="text-xs">横坐标</span>: 232.017 <span class="text-xs">毫米</span> <span class="text-xs"> </span><span class="text-xs">纵坐标</span>: 49.9823 <span class="text-xs">毫米</span><span class="text-xs"> 页</span>: 1</span>
    <span class="relative h-[22px] w-[113px]">
      <select aria-label="缩放" class="h-full w-full appearance-none rounded-sm border border-[#b0b0b0] bg-white px-[3px] font-['DejaVu_Sans_Mono',monospace] text-[10px]"><option>86.1%</option></select>
      <span class="pointer-events-none absolute inset-y-px right-px flex w-5 items-center justify-center border-l border-[#b0b0b0] bg-[#f6f6f6]"><svg class="h-[5px] w-2"><use href="#down"/></svg></span>
    </span>
    <input type="range" aria-label="缩放滑块" min="0" max="100" value="9" class="ml-[6px] h-[14px] w-[99px] appearance-none bg-[linear-gradient(to_right,#1c7cd6_0_10px,#c4c4c4_10px)] bg-[length:100%_3px] bg-center bg-no-repeat [&::-webkit-slider-thumb]:size-[13px] [&::-webkit-slider-thumb]:appearance-none [&::-webkit-slider-thumb]:rounded-sm [&::-webkit-slider-thumb]:border [&::-webkit-slider-thumb]:border-[#a8a8a8] [&::-webkit-slider-thumb]:bg-[#f8f8f8]">
    <span class="pointer-events-none absolute right-[9px] top-0 font-['Liberation_Sans',sans-serif] text-[16px] leading-[18px] text-white/70 text-shadow-[0_0_1px_#00000055]">https://blog.csdn.net/QGISClass</span>
  </footer>
</div>

<script>
const icon = n => `<svg class="size-6"><use href="#${n}"/></svg>`;
document.querySelectorAll('[data-icons]').forEach(el => {
  el.innerHTML = el.dataset.icons.split(' ').map(n => n === '|'
    ? '<i class="mx-[3px] h-5 w-px bg-[#c8c8c8]"></i>'
    : `<button aria-label="${n}" class="flex h-[31px] w-[33px] items-center justify-center">${icon(n)}</button>`).join('');
});
'hand zoomtool select movecontent editnodes addmap add3d addpic addlabel addlegend addscale addnorth addshape addarrow addnode addhtml addtable'.split(' ').forEach(n => {
  document.getElementById('tools').insertAdjacentHTML('beforeend', n === 'select'
    ? `<button aria-label="${n}" aria-pressed="true" class="my-px flex h-[30px] w-8 shrink-0 items-center justify-center rounded-sm border border-[#adadad] bg-[#dcdcdc]">${icon(n)}</button>`
    : `<button aria-label="${n}" class="flex h-8 w-8 shrink-0 items-center justify-center">${icon(n)}</button>`);
});

document.getElementById('items').innerHTML = [['label', 'Wetlands Map', 1], ['label', '[%concat(\'County of \', "N...', 0], ['mapitem', '地图 1', 0]].map(([ic, t, b]) => `
  <tr class="h-[19px]">
    <td class="p-0 pl-[3px]"><span class="relative block size-[14px]"><input type="checkbox" checked aria-label="可见 ${t.replace(/"/g, '')}" class="block size-[14px] appearance-none border border-[#b8b8b8] bg-white"><svg class="pointer-events-none absolute inset-0 size-[14px]"><use href="#check"/></svg></span></td>
    <td class="p-0 pl-[3px]"><input type="checkbox" aria-label="锁定 ${t.replace(/"/g, '')}" class="block size-[14px] appearance-none border border-[#b8b8b8] bg-white"></td>
    <td class="p-0 pl-1"><span class="flex items-center gap-[7px]"><svg class="h-3 w-[14px]"><use href="#${ic}"/></svg><span class="${b ? 'font-bold' : ''}">${t}</span></span></td>
  </tr>`).join('');

document.querySelectorAll('[data-radios]').forEach(el => {
  const [g, list] = el.dataset.radios.split(':');
  el.innerHTML = list.split(',').map((t, i) => `<label class="mr-[11px] flex items-center gap-[6px]"><input type="radio" name="${g}" ${i === 1 ? 'checked' : ''} class="size-[14px] appearance-none rounded-full border border-[#b0b0b0] bg-white checked:bg-[radial-gradient(circle,#333_0_3px,#fff_4px)]">${t}</label>`).join('');
});

/* Rulers: 2 mm minor ticks, 10 mm medium, 20 mm labelled */
const PX = 3.2536;
let h = '', v = '';
for (let m = -76; m <= 374; m += 2) {
  const x = Math.floor(266 + m * PX) + .5;
  const len = m % 20 === 0 ? 17 : m % 10 === 0 ? 6 : 4;
  h += `<path d="M${x} ${len === 17 ? 1 : 17 - len}V17" stroke="#333"/>`;
  if (len === 17) h += `<text x="${x + .5}" y="10" fill="#555">${String(m).replace('-', '−')}</text>`;
}
h += '<path d="M1021.500 0V17" stroke="red"/>';
for (let m = -56; m <= 266; m += 2) {
  const y = Math.floor(186 + m * PX) + .5;
  const len = m % 20 === 0 ? 16 : m % 10 === 0 ? 6 : 4;
  v += `<path d="M${16 - len} ${y}H16" stroke="#333"/>`;
  if (len === 16) v += `<text transform="translate(9 ${y + 3}) rotate(-90)" text-anchor="end" fill="#555">${String(m).replace('-', '−')}</text>`;
}
v += '<path d="M0 1032.500H16" stroke="red"/>';
document.getElementById('hruler').innerHTML = h;
document.getElementById('vruler').innerHTML = v;

/* Wetlands coverage around the island */
let seed = 7;
const rnd = () => (seed = (seed * 16807) % 2147483647) / 2147483647;
const pts = s => s.trim().split(/\s+/).map(p => p.split(',').map(Number));
const rough = (p, k) => {
  const out = [p[0]];
  for (let i = 1; i < p.length; i++) {
    const [a, b] = p[i - 1], [c, d] = p[i], n = Math.max(1, Math.round(Math.hypot(c - a, d - b) / 3));
    for (let j = 1; j < n; j++) out.push([a + (c - a) * j / n + (rnd() - .5) * k, b + (d - b) * j / n + (rnd() - .5) * k]);
    out.push(p[i]);
  }
  return out;
};
const outer = pts(`595,711.5 579.2,711.5 582.5,914 629.7,913.5 630.5,960 771.5,960 769.5,861.5 863,859.5 862.5,810 1002.5,807 1001.7,757.5 1048.5,756.5 1046,657.5 999,659 998,609.5 951.5,610.5 949,512 855.5,514 854.5,464.5 761.5,466.500 760,417.5 667,419.5 666.5,397 573.5,397 576.5,569 530,570 531.3,668.5 578.5,667.5 579,696.5 591,695.7`);
const coast = pts(`591,695.7 589,682 582,666 578,661 566,657 564,651 567,647 564,641 560,639 558,630 554,627 557,618 558,608 567,601 575,593 582,583 587,577 600,576 606,575 604,569 610,562 617,551 616,546 625,537 630,529 637,527 639,520 640,508 635,502 636,500 627,487 618,477 613,465 610,447 609,437 611,425 616,416 620,413 625,412 633,412 648,418 663,423 673,432 672,445 674,437 685,443 700,450 708,457 706,467 708,476 709,460 715,459 720,463 723,467 717,485 721,474 727,469 738,465 753,470 767,472 787,480 800,488 817,494 828,501 847,507 856,515 873,527 887,537 900,550 905,558 915,565 918,573 915,588 916,604 916,620 922,623 925,619 934,615 948,616 953,623 958,632 957,652 971,660 971,665 988,678 999,687 1019,693 1024,698 1022,707 1019,715 996,740 980,750 964,763 961,769 946,777 927,783 908,797 898,801 877,806 865,803 856,801 844,805 829,816 823,826 808,832 798,837 787,850 770,856 766,857 765,862 756,870 749,878 749,892 740,902 734,912 733,920 725,923 720,933 712,941 702,946 700,937 684,923 674,922 657,908 642,904 626,898 625,892 615,878 611,863 613,850 617,827 618,808 621,797 622,778 618,767 612,755 614,750 608,742 606,732 608,724 599,722 596,714`);
const lakeA = pts(`671.7,455 667,467 665,471 673,480 687,487 693,495 700,498 707,493 707,490 698,490 702,485 694,481 704,477 692,472 702,470 702,465 692,458 680,455 682,472 677,473 673,470 670,470 668,467 672.3,456`);
const lakeB = pts(`847,555 851,554 848,566 855,562 863,563 870,557 877,561 879,577 885,578 880,582 884,588 890,593 883,596 871,600 876,607 872,613 867,610 860.5,618 852,615 844,617 842.5,605 839.5,601 842.5,592 842,583 844,570 845,560`);
const lakeC = pts(`858,624 866,624 875,628 866,627`);
const d = p => 'M' + p.map(q => q[0].toFixed(1) + ' ' + q[1].toFixed(1)).join('L') + 'Z';
/* centre x, centre y, half width, half height, count, darkness */
const clusters = [[828,585,12,38,55,.5],[835,558,8,8,20,.7],[805,622,10,10,45,.6],[822,629,14,2,16,.8],[835,623,5,6,14,.9],[631,425,8,10,12,.7],[655,428,12,10,8,.7],[645,452,8,8,8,.7],[658,465,8,8,20,.7],[746,487,5,6,12,.8],[757,505,8,12,22,.4],[785,509,6,4,10,.6],[695,507,4,3,5,.9],[710,505,4,3,4,.9],[808,520,30,30,18,.6],[722,572,7,7,8,.5],[850,715,28,20,16,.6],[890,714,4,15,16,.6],[853,726,4,10,8,.6],[615,655,14,5,9,.7],[942,653,4,4,9,.9],[953,659,3,2,7,1],[894,655,5,4,5,.7],[820,665,3,5,4,.9],[895,628,7,4,10,.8],[1020,708,2,5,6,.9],[650,600,60,40,7,.8],[700,880,60,40,8,.6],[700,690,100,50,6,.5],[690,471,11,5,30,.9],[688,461,10,4,26,.9]];
let dots = '';
for (const [cx, cy, rx, ry, n, o] of clusters) for (let i = 0; i < n; i++)
  dots += `<rect x="${Math.round(cx + (rnd() * 2 - 1) * rx)}" y="${Math.round(cy + (rnd() * 2 - 1) * ry)}" width="${rnd() > .8 ? 2 : 1}" height="1" opacity="${(o * (.5 + rnd() * .6)).toFixed(2)}"/>`;
document.getElementById('map').innerHTML = `
  <clipPath id="frame"><rect x="520" y="400" width="540" height="558"/></clipPath>
  <g clip-path="url(#frame)">
    <g fill="#a8e0ef" stroke="#57a8d6" stroke-width="1.2">
      <path d="${d(outer.concat(rough(coast, 1.3)))}"/>
      <path d="${d(rough(lakeA, 1.5))}"/><path d="${d(rough(lakeB, 1.5))}"/><path d="${d(lakeC)}"/>
      <path d="M680 456v10M684 457v10M687 458l1 12M691 460l1 9M695 461v7M699 463l-1 6M678 459l5 8" stroke="#4796cd" fill="none"/>
    </g>
    <g fill="#2f8cc8">${dots}</g>
  </g>`;
</script>
</body>
</html>
